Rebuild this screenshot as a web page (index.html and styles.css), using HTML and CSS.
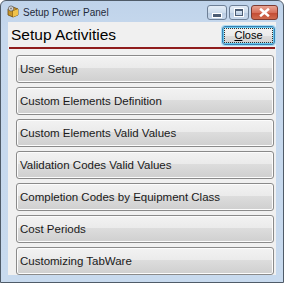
FILE: index.html
```html
<!DOCTYPE html>
<html lang="en">
<head>
    <meta charset="UTF-8">
    <title>Setup Power Panel</title>
    <link rel="stylesheet" href="styles.css">
</head>
<body>
    <div class="window">
        <div class="titlebar">
            <svg class="app-icon" width="12" height="13" viewBox="0 0 12 13">
                <path d="M1 4 L6 2 L11 4 L11 10 L6 12 L1 10 Z" fill="#c8962a" stroke="#6b4a12" stroke-width="0.8"/>
                <path d="M1 4 L6 6 L11 4" fill="none" stroke="#6b4a12" stroke-width="0.8"/>
                <path d="M6 6 L6 12" stroke="#6b4a12" stroke-width="0.8"/>
                <path d="M6 6 L11 4 L11 10 L6 12 Z" fill="#f0c24a"/>
                <circle cx="4" cy="3.5" r="2.6" fill="#d9d9d9" stroke="#555" stroke-width="0.7"/>
                <circle cx="4" cy="3.5" r="0.9" fill="#777"/>
            </svg>
            <span class="title">Setup Power Panel</span>
            <div class="caption-buttons">
                <div class="cap-btn cap-min"><span class="glyph-min"></span></div>
                <div class="cap-btn cap-max"><span class="glyph-max"></span></div>
                <div class="cap-btn cap-close">
                    <svg width="11" height="9" viewBox="0 0 11 9">
                        <path d="M2 1.5 L9 7.5 M9 1.5 L2 7.5" stroke="#fff" stroke-width="2.4" stroke-linecap="square"/>
                    </svg>
                </div>
            </div>
        </div>
        <div class="client">
            <div class="panel-header">
                <h1>Setup Activities</h1>
                <button class="close-button"><span class="focus-rect"><u>C</u>lose</span></button>
            </div>
            <div class="header-rule"></div>
            <div class="activity-list">
                <button class="activity">User Setup</button>
                <button class="activity">Custom Elements Definition</button>
                <button class="activity">Custom Elements Valid Values</button>
                <button class="activity">Validation Codes Valid Values</button>
                <button class="activity">Completion Codes by Equipment Class</button>
                <button class="activity">Cost Periods</button>
                <button class="activity">Customizing TabWare</button>
            </div>
        </div>
    </div>
</body>
</html>
```

FILE: styles.css
```css
body {
    margin: 0;
    background: #ffffff;
    font-family: "Liberation Sans", Arial, sans-serif;
}
.window {
    width: 284px;
    height: 283px;
    box-sizing: border-box;
    border: 1px solid #4f5b68;
    border-radius: 6px 6px 0 0;
    background: linear-gradient(to bottom, #bfd3ea 0px, #c6d8ed 30px, #c8daee 100%);
    display: flex;
    flex-direction: column;
    padding: 0 7px 7px 7px;
}
.titlebar {
    height: 21px;
    display: flex;
    align-items: center;
    flex-shrink: 0;
}
.app-icon {
    margin-left: -1px;
    margin-right: 4px;
}
.title {
    font-family: "Liberation Sans", Arial, sans-serif;
    font-size: 10px;
    color: #1e2a3a;
    flex: 1;
    margin-top: 1px;
}
.caption-buttons {
    display: flex;
    gap: 2px;
    align-self: flex-start;
    margin-top: 4px;
    margin-right: -2px;
}
.cap-btn {
    height: 15px;
    border: 1px solid #6d7f96;
    border-radius: 3px;
    box-sizing: border-box;
    display: flex;
    align-items: center;
    justify-content: center;
    background: linear-gradient(to bottom, #e4edf7 0%, #cddcec 50%, #b9cce3 51%, #c9d9ec 100%);
}
.cap-min, .cap-max {
    width: 20px;
}
.cap-close {
    width: 27px;
    border-color: #7d3b32;
    background: linear-gradient(to bottom, #e8a493 0%, #d7705b 50%, #c24a32 51%, #d06a4e 100%);
}
.glyph-min {
    width: 8px;
    height: 3px;
    margin-top: 5px;
    background: #4c5d74;
    border: 1px solid #ffffff;
}
.glyph-max {
    width: 6px;
    height: 4px;
    border: 1px solid #4c5d74;
    border-top-width: 2px;
    box-shadow: 0 0 0 1px #ffffff;
}
.client {
    flex: 1;
    background: #f0f0f0;
    padding: 0 1px 0 8px;
}
.panel-header {
    display: flex;
    align-items: center;
    justify-content: space-between;
    height: 24px;
    margin-left: -7px;
}
.panel-header h1 {
    margin: 0;
    font-size: 15.5px;
    font-weight: normal;
    color: #000;
    padding-left: 2px;
    margin-top: 1px;
}
.close-button {
    width: 53px;
    height: 19px;
    margin-top: 2px;
    padding: 1px;
    border: 1px solid #3c7fb1;
    border-radius: 3px;
    background: linear-gradient(to bottom, #f2f2f2 0%, #ebebeb 50%, #dddddd 51%, #cfcfcf 100%);
    box-shadow: 0 0 0 1px #a9dcf5, inset 0 0 0 1px #63c7ef;
    font-family: "Liberation Sans", Arial, sans-serif;
    font-size: 11px;
    color: #000;
    display: flex;
}
.focus-rect {
    flex: 1;
    border: 1px dotted #333;
    display: flex;
    align-items: center;
    justify-content: center;
}
.header-rule {
    height: 2px;
    background: #8f1c1c;
    margin: 1px 0 6px -7px;
}
.activity-list {
    display: flex;
    flex-direction: column;
    gap: 4px;
}
.activity {
    height: 28px;
    width: 258px;
    text-align: left;
    padding: 0 0 0 3px;
    border: 1px solid #8a8a8a;
    border-radius: 3px;
    background: linear-gradient(to bottom, #f2f2f2 0%, #ebebeb 45%, #dddddd 46%, #cfcfcf 100%);
    box-shadow: inset 0 0 0 1px #fcfcfc;
    font-family: "Liberation Sans", Arial, sans-serif;
    font-size: 11.5px;
    color: #1a1a1a;
}
```
